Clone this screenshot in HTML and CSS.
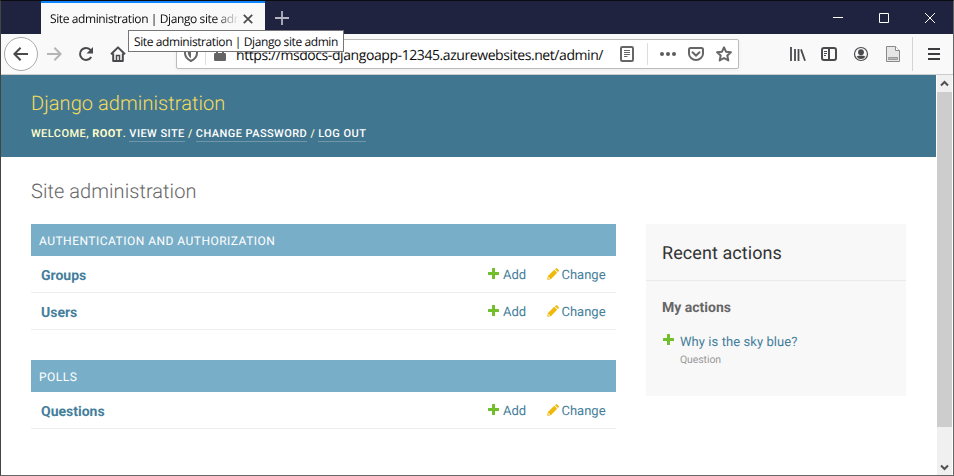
FILE: index.html
```html
<!DOCTYPE html>
<html lang="en">
<head>
<meta charset="utf-8">
<title>Site administration | Django site admin</title>
<link rel="stylesheet" href="styles.css">
</head>
<body>
<svg class="defs" width="0" height="0">
  <symbol id="plus" viewBox="0 0 11 11"><path d="M4.500 0h2Q7 0 7 .5V4h3.500Q11 4 11 4.500v2Q11 7 10.500 7H7v3.500Q7 11 6.500 11h-2Q4 11 4 10.500V7H.500Q0 7 0 6.500v-2Q0 4 .500 4H4V.500Q4 0 4.500 0z" fill="#70bf2b"/></symbol>
  <symbol id="pencil" viewBox="0 0 12 12"><path d="M7.900 1.200 8.800.4q.7-.6 1.400 0l1.500 1.500q.6.7 0 1.400l-.9.800zM7.200 1.800l3 3-6.100 6.200q-2 .8-3.800.700Q.2 9.800 1 7.900zM1.600 8.800l-.3 1.900 1.900-.3z" fill="#efb80b" fill-rule="evenodd"/></symbol>
</svg>
<div class="window">
  <div class="titlebar">
    <div class="tab">
      <span class="tab-title">Site administration | Django site admin</span>
      <svg class="tab-close" width="10" height="10" viewBox="0 0 10 10"><path d="M.8.8l8.400 8.400M9.200.8.8 9.200" stroke="#4a4a4c" stroke-width="1.7"/></svg>
    </div>
    <svg class="new-tab" width="14" height="14" viewBox="0 0 14 14"><path d="M7 0v14M0 7h14" stroke="#b4b5c0" stroke-width="1.8"/></svg>
    <div class="controls">
      <svg width="10" height="10" viewBox="0 0 10 10"><path d="M0 4.500h10" stroke="#fff"/></svg>
      <svg width="10" height="10" viewBox="0 0 10 10"><path d="M.5.500h9v9h-9z" stroke="#fff" fill="none"/></svg>
      <svg width="10" height="10" viewBox="0 0 10 10"><path d="M0 0l10 10M10 0 0 10" stroke="#fff"/></svg>
    </div>
  </div>
  <div class="toolbar">
    <div class="back"><svg width="16" height="16" viewBox="0 0 16 16"><path d="M15 8H1.500M7.600 1.800 1.400 8l6.200 6.200" class="line"/></svg></div>
    <svg class="forward" width="16" height="16" viewBox="0 0 16 16"><path d="M1 8h13.500M8.400 1.800 14.600 8l-6.200 6.200" class="line pale"/></svg>
    <svg class="reload" width="16" height="16" viewBox="0 0 16 16"><path d="M12.700 4.200A6 6 0 1 0 13.200 11" class="line"/><path d="M15 1v6.500H8.500z" fill="#4a4a4c"/></svg>
    <svg class="home" width="16" height="16" viewBox="0 0 16 16"><path d="M1 8.300 8 1.400l7 6.900M3.200 7.500v7.400h9.600V7.500" class="line" stroke-linejoin="round"/><path d="M6.500 15V9.400h3V15" class="line thin"/></svg>
    <div class="urlbar">
      <svg class="shield" width="14" height="16" viewBox="0 0 14 16"><path d="M7 1 13 3v4q0 5-6 8-6-3-6-8V3z" class="line muted"/><path d="M7 3.500v8.700q-3-2-3.200-6V4.300z" fill="#666"/></svg>
      <span class="divider"></span>
      <svg class="lock" width="12" height="16" viewBox="0 0 12 16"><path d="M3 8V4.500a3 3 0 0 1 6 0V8" class="line muted"/><rect y="7" width="12" height="8" rx="1.3" fill="#636363"/></svg>
      <span class="url">https://msdocs-djangoapp-12345.azurewebsites.net/admin/</span>
      <svg class="reader" width="14" height="16" viewBox="0 0 14 16"><rect x="1" y="1" width="12" height="14" rx="1.2" class="line muted"/><path d="M4 4.500h6M4 6.500h6M4 8.500h6M4 10.500h3.500" stroke="#666"/></svg>
      <span class="divider tall"></span>
      <svg class="dots" width="16" height="16" viewBox="0 0 16 16"><g fill="#5c5c5e"><circle cx="2" cy="8" r="2"/><circle cx="8" cy="8" r="2"/><circle cx="14" cy="8" r="2"/></g></svg>
      <svg class="pocket" width="16" height="16" viewBox="0 0 16 16"><path d="M2.500 2h11Q15 2 15 3.500V7.500a7 6.500 0 0 1-14 0V3.500Q1 2 2.500 2zM4.500 6.300 8 9.600l3.500-3.300" class="line muted" stroke-linecap="round"/></svg>
      <svg class="star" width="16" height="16" viewBox="0 0 16 16"><path d="m8 1.300 2 4.400 4.900.5-3.600 3.300 1 4.900L8 12l-4.300 2.400 1-4.900L1.100 6.200 6 5.700z" class="line muted" stroke-linejoin="round"/></svg>
    </div>
    <svg class="library" width="16" height="16" viewBox="0 0 16 16"><path d="M1 1v14M5 3v12M8.500 3v12M11 3.400l4 11.400" class="line books"/></svg>
    <svg class="sidebar" width="16" height="16" viewBox="0 0 16 16"><rect x="1" y="2" width="14" height="12" rx="2" class="line"/><path d="M8 2v12" class="line"/><path d="M3 5.500h3M3 7.500h3M3 9.500h2" stroke="#4a4a4c"/></svg>
    <svg class="account" width="16" height="16" viewBox="0 0 16 16"><circle cx="8" cy="8" r="6.500" fill="none" stroke="#4a4a4c" stroke-width="1.200"/><circle cx="8" cy="6.200" r="2.900" fill="#4a4a4c"/><path d="M3.600 10.500q2-1 4.400-1t4.400 1Q11 13 8 13t-4.400-2.500z" fill="#4a4a4c"/></svg>
    <svg class="document" width="14" height="16" viewBox="0 0 14 16"><path d="M.5.500h9l4 4v11H.500z" fill="#e6e6e6" stroke="#8a8a8a"/><path d="M9.500.500v4h4" fill="#fff" stroke="#8a8a8a"/><path d="M2.500 11.500h9v2h-9z" fill="#bbb" stroke="#999"/></svg>
    <span class="separator"></span>
    <svg class="menu" width="12" height="12" viewBox="0 0 12 12"><path d="M0 1h12M0 6h12M0 11h12" stroke="#3c3c3e" stroke-width="1.800"/></svg>
  </div>
  <div class="viewport">
    <div class="page">
      <header>
        <div class="brand"><span>Django administration</span></div>
        <div class="user-tools">Welcome, <strong>root</strong>. <a>View site</a> / <a>Change password</a> / <a>Log out</a></div>
      </header>
      <h1><span>Site administration</span></h1>
      <div class="content">
        <main>
          <section>
            <h2>Authentication and Authorization</h2>
            <div class="row"><b>Groups</b><svg class="plus"><use href="#plus"/></svg><a class="add">Add</a><svg class="pencil"><use href="#pencil"/></svg><a class="change">Change</a></div>
            <div class="row"><b>Users</b><svg class="plus"><use href="#plus"/></svg><a class="add">Add</a><svg class="pencil"><use href="#pencil"/></svg><a class="change">Change</a></div>
          </section>
          <section>
            <h2>Polls</h2>
            <div class="row"><b>Questions</b><svg class="plus"><use href="#plus"/></svg><a class="add">Add</a><svg class="pencil"><use href="#pencil"/></svg><a class="change">Change</a></div>
          </section>
        </main>
        <aside>
          <h3>Recent actions</h3>
          <h4>My actions</h4>
          <div class="action"><svg class="plus"><use href="#plus"/></svg><div><a>Why is the sky blue?</a><small>Question</small></div></div>
        </aside>
      </div>
    </div>
    <div class="scrollbar">
      <svg width="15" height="17" viewBox="0 0 15 17"><path d="M4 10.500 7.500 7l3.500 3.500" fill="none" stroke="#505050" stroke-width="2"/></svg>
      <div class="thumb"></div>
      <svg class="down" width="15" height="17" viewBox="0 0 15 17"><path d="M4 7.500l3.500 3.500L11 7.500" fill="none" stroke="#505050" stroke-width="2"/></svg>
    </div>
  </div>
  <div class="tooltip">Site administration | Django site admin</div>
</div>
</body>
</html>
```
FILE: styles.css
```css
* { box-sizing: border-box; }
body { margin: 0; overflow: hidden; font-family: Roboto, sans-serif; text-rendering: geometricPrecision; }
svg { display: block; flex: none; }
.defs { position: absolute; }
.window {
  position: relative;
  display: flex;
  flex-direction: column;
  width: 954px;
  height: 476px;
  border: 1px solid #666;
  border-top-color: #0b0b12;
  border-left-color: #444;
  background: #fff;
}
.titlebar { display: flex; align-items: center; height: 33px; flex: none; background: #202340; }
.tab {
  display: flex;
  align-items: center;
  width: 224px;
  height: 33px;
  margin-left: 40px;
  padding: 0 12px 0 9px;
  border-top: 2px solid #0a84ff;
  background: #f9f9fa;
}
.tab-title, .tooltip, .url { font-family: "Open Sans", sans-serif; white-space: nowrap; color: #0c0c0d; }
.tab-title {
  width: 189px;
  overflow: hidden;
  font-size: 12px;
  letter-spacing: -0.4px;
  -webkit-mask-image: linear-gradient(90deg, #000 165px, transparent 189px);
  mask-image: linear-gradient(90deg, #000 165px, transparent 189px);
}
.tab-close { margin: 0 0 0 4px; }
.new-tab { margin-left: 10px; }
.controls { display: flex; gap: 36px; margin-left: auto; margin-right: 18px; }
.toolbar {
  display: flex;
  align-items: center;
  height: 41px;
  flex: none;
  padding-left: 3px;
  background: #f9f9fa;
  border-bottom: 1px solid #ccc;
}
.line { fill: none; stroke: #4a4a4c; stroke-width: 2; }
.thin { stroke-width: 1.5; }
.books { stroke-width: 1.8; }
.pale { stroke: #b5b5b6; }
.muted { stroke: #666; }
.back {
  display: flex;
  align-items: center;
  justify-content: center;
  width: 34px;
  height: 34px;
  border: 1px solid #aaa;
  border-radius: 50%;
  background: #fff;
}
.forward { margin-left: 8px; }
.reload { margin-left: 16px; }
.home { margin-left: 16px; }
.urlbar {
  display: flex;
  align-items: center;
  width: 563px;
  height: 30px;
  margin-left: 50px;
  padding-left: 7px;
  border: 1px solid #bbb;
  border-radius: 2px;
  background: #fff;
  box-shadow: 0 1px 4px rgba(0, 0, 0, .06);
}
.divider { width: 1px; height: 22px; margin: 0 8px 0 7px; background: #ddd; }
.divider.tall { margin: 0 12px 0 13px; }
.url { width: 384px; margin-left: 10px; padding-top: 3px; font-size: 14px; line-height: 22px; letter-spacing: -0.42px; }
.pocket, .star { margin-left: 12px; }
.library { margin-left: 51px; }
.sidebar { margin-left: 15px; }
.account { margin-left: 16px; }
.document { margin-left: 17px; }
.separator { width: 1px; height: 34px; margin: 0 15px 0 12px; background: #d4d4d5; }
.viewport { display: flex; flex: 1; min-height: 0; }
.page { width: 935px; }
header { height: 82px; padding: 14px 30px 0; background: #417690; color: #ffc; }
.brand { height: 28px; font-size: 20px; line-height: 28px; font-weight: 300; letter-spacing: .07px; color: #f5dd5d; }
.user-tools { margin-top: 9px; font-size: 11px; line-height: 16px; font-weight: 500; letter-spacing: .44px; text-transform: uppercase; white-space: nowrap; }
.user-tools a { display: inline-block; height: 15px; line-height: 14px; color: #fff; border-bottom: 1px solid #7096aa; }
h1 { height: 67px; margin: 0; padding: 20px 30px 0; font-size: 20px; line-height: 28px; font-weight: 300; letter-spacing: .06px; color: #666; }
.content { display: flex; align-items: flex-start; gap: 30px; padding-left: 30px; }
main { width: 585px; }
section { margin-bottom: 30px; }
h2 { height: 32px; margin: 0; padding: 1px 0 0 8px; font-size: 12px; line-height: 33px; font-weight: 400; letter-spacing: .48px; text-transform: uppercase; color: #fff; background: #79aec8; }
.row { display: flex; align-items: center; height: 37px; padding: 2px 0 0 10px; border-bottom: 1px solid #eee; color: #447e9b; font-size: 13px; }
.row b { flex: 1; padding-top: 1px; font-size: 14px; }
.plus { width: 11px; height: 11px; }
.row .plus { margin-top: -3px; }
.pencil { width: 12px; height: 12px; margin-top: -2px; }
.add { width: 43.5px; margin-left: 4px; }
.change { width: 55px; margin-left: 3px; margin-right: -.5px; }
aside { width: 260px; height: 172px; background: #f8f8f8; }
h3 { height: 57px; margin: 0; padding: 1px 0 0 16px; font-size: 18px; line-height: 58px; font-weight: 400; letter-spacing: .07px; color: #333; border-bottom: 1px solid #eaeaea; }
h4 { margin: 17px 0 0 16px; font-size: 14px; line-height: 20px; font-weight: 700; color: #666; }
.action { display: flex; gap: 6px; margin: 16px 0 0 17px; font-size: 13px; line-height: 18px; letter-spacing: .07px; color: #447e9b; }
.action .plus { margin-top: 0; }
.action small { display: block; font-size: 10.5px; line-height: 15px; letter-spacing: -.1px; color: #999; }
.scrollbar { display: flex; flex-direction: column; width: 15px; margin-left: 1px; background: #f0f0f0; }
.thumb { height: 335px; background: #cdcdcd; }
.down { margin-top: auto; }
.tooltip {
  position: absolute;
  left: 127px;
  top: 29px;
  width: 216px;
  height: 22px;
  padding-left: 5px;
  border: 1px solid #767676;
  background: #fff;
  font-size: 12px;
  line-height: 22px;
  letter-spacing: -0.4px;
}
```
